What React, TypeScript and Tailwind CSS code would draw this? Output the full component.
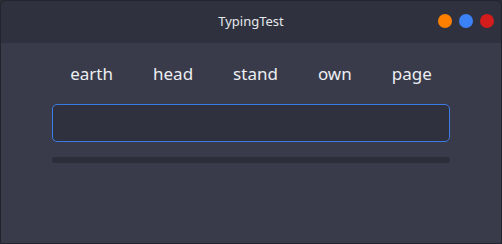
export default function App() {
  const words = ["earth", "head", "stand", "own", "page"];

  return (
    <div className="h-[244px] w-[502px] bg-[#2a2c36] font-['Noto_Sans',sans-serif]">
      <div className="flex h-full flex-col overflow-hidden rounded-t-[6px] border border-[#23252e]">
        <div className="relative flex h-[42px] items-center justify-center bg-[#2f323e]">
          <span className="text-[13px] text-[#e6e7ea]">TypingTest</span>
          <div className="absolute right-[7px] top-[13px] flex gap-[7px]">
            <span className="h-[14px] w-[14px] rounded-full bg-[#ff7f00]" />
            <span className="h-[14px] w-[14px] rounded-full bg-[#3b82f6]" />
            <span className="h-[14px] w-[14px] rounded-full bg-[#d41c1c]" />
          </div>
        </div>
        <div className="flex flex-1 flex-col items-center bg-[#393b4b] px-[51px] pt-[19px]">
          <div className="flex gap-10 text-[17px] leading-[24px] text-[#eceef2]">
            {words.map((w) => (
              <span key={w}>{w}</span>
            ))}
          </div>
          <input
            type="text"
            aria-label="Typ hier"
            className="mt-[18px] h-[38px] w-full rounded-[5px] border border-[#3a7be6] bg-[#2f323e] px-2 text-[#eceef2] outline-none"
          />
          <div className="mt-[15px] h-[6px] w-full rounded-full bg-[#2c2e3a]" />
        </div>
      </div>
    </div>
  );
}
